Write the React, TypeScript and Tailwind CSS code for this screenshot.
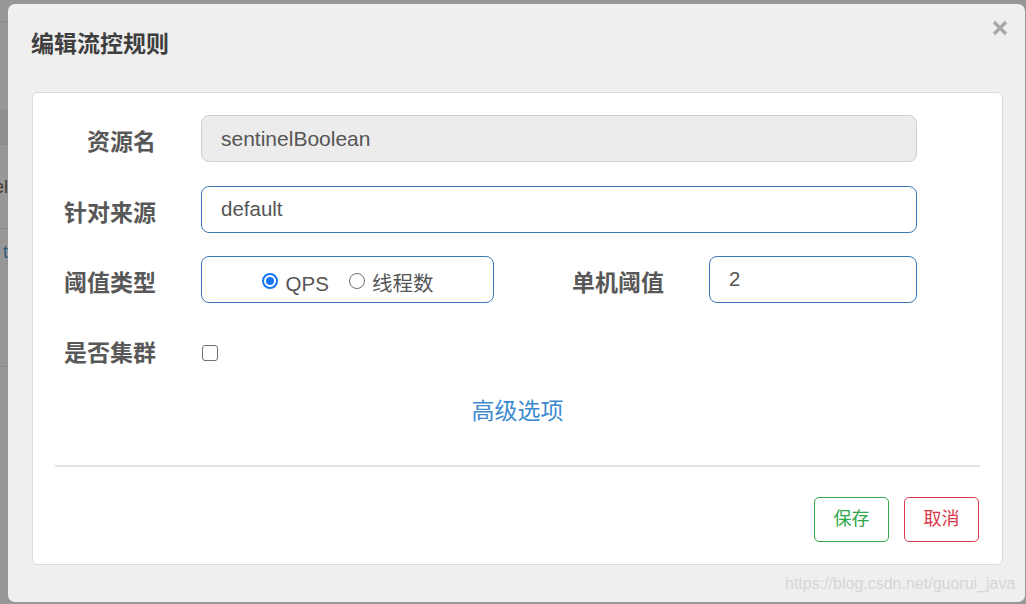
import React from "react";

const FONT = { fontFamily: '"Liberation Sans", "Noto Sans CJK SC", sans-serif' };

function Label({ children, w }: { children: React.ReactNode; w: string }) {
  return (
    <div className={`${w} shrink-0 text-right text-[23px] font-bold text-[#585858] pt-[16px] leading-none`}>
      {children}
    </div>
  );
}

export default function App() {
  return (
    <div className="relative w-[1026px] h-[604px] overflow-hidden bg-[#979797]" style={FONT}>
      {/* background page remnants */}
      <div className="flex flex-col w-[8px] overflow-hidden">
        <div className="h-[22px] border-b border-[#8a8a8a]" />
        <div className="h-[88px]" />
        <div className="h-[35px] bg-[#8f8f8f] border-b border-[#8a8a8a]" />
        <div className="h-[84px] border-b border-[#8a8a8a] flex items-center justify-end text-[18px] text-[#4a3a2e] leading-none">
          <span className="shrink-0">el</span>
        </div>
        <div className="h-[138px] border-b border-[#8a8a8a] pt-[14px] flex justify-end text-[18px] text-[#2f5a78] leading-none">
          <span className="shrink-0">t</span>
        </div>
      </div>

      {/* modal */}
      <div className="absolute left-[8px] top-[4px] w-[1017px] h-[598px] rounded-[7px] bg-[#efefef]">
        <div className="flex items-center justify-between h-[82px] pl-[23px] pr-[17px]">
          <div className="text-[23px] font-bold text-[#3e3e3e] leading-none -mt-[1px]">编辑流控规则</div>
          <svg width="16" height="16" viewBox="0 0 16 16" className="-mt-[34px]">
            <path d="M2 2 L14 14 M14 2 L2 14" stroke="#a8a8a8" strokeWidth="3.2" strokeLinecap="butt" />
          </svg>
        </div>

        <div className="ml-[24px] mt-[6px] w-[971px] h-[473px] rounded-[6px] border border-[#dadada] bg-white flex flex-col">
          <div className="flex flex-col pt-[22px]">
            {/* row 1 */}
            <div className="flex items-start gap-[45px] mb-[24px]">
              <Label w="w-[123px]">资源名</Label>
              <div className="w-[716px] h-[47px] rounded-[8px] border border-[#cfcfcf] bg-[#ececec] flex items-center px-[19px] text-[21px] text-[#555]">
                sentinelBoolean
              </div>
            </div>
            {/* row 2 */}
            <div className="flex items-start gap-[45px] mb-[23px]">
              <Label w="w-[123px]">针对来源</Label>
              <div className="w-[716px] h-[47px] rounded-[8px] border border-[#3b78b8] bg-white flex items-center px-[19px] text-[20.5px] text-[#555]">
                default
              </div>
            </div>
            {/* row 3 */}
            <div className="flex items-start mb-[23px]">
              <Label w="w-[123px]">阈值类型</Label>
              <div className="ml-[45px] w-[293px] h-[47px] rounded-[8px] border border-[#3b78b8] bg-white flex items-center justify-center pt-[9px] text-[20.5px] text-[#555]">
                <div className="w-[16px] h-[16px] rounded-full border-[2px] border-[#1476f2] flex items-center justify-center -mt-[7px]">
                  <div className="w-[8px] h-[8px] rounded-full bg-[#1476f2]" />
                </div>
                <span className="ml-[8px] leading-none">QPS</span>
                <div className="ml-[20px] w-[16px] h-[16px] rounded-full border-[1.5px] border-[#707070] -mt-[7px]" />
                <span className="ml-[7px] leading-none">线程数</span>
              </div>
              <Label w="w-[170px]">单机阈值</Label>
              <div className="ml-[45px] w-[208px] h-[47px] rounded-[8px] border border-[#3b78b8] bg-white flex items-center px-[19px] text-[20.5px] text-[#555]">
                2
              </div>
            </div>
            {/* row 4 */}
            <div className="flex items-start h-[47px]">
              <Label w="w-[123px]">是否集群</Label>
              <div className="ml-[46px] mt-[19px] w-[16px] h-[16px] rounded-[3px] border-[1.5px] border-[#6f6f6f] bg-white" />
            </div>
          </div>

          <div className="mt-[27px] text-center text-[23px] text-[#3d8ad0] leading-none">高级选项</div>

          <div className="mx-[22px] mt-[42px] h-[2px] bg-[#e3e3e3]" />

          <div className="flex justify-end gap-[15px] mr-[23px] mt-[30px]">
            <div className="w-[75px] h-[45px] rounded-[5px] border border-[#2ea84a] text-[#2ea84a] text-[18px] flex items-center justify-center">
              保存
            </div>
            <div className="w-[75px] h-[45px] rounded-[5px] border border-[#d9394b] text-[#d9394b] text-[18px] flex items-center justify-center">
              取消
            </div>
          </div>
        </div>

        <div className="absolute left-[777px] top-[572px] text-[16px] text-[#d6d6d6] leading-none" style={{ fontFamily: '"Liberation Sans", sans-serif' }}>
          https://blog.csdn.net/guorui_java
        </div>
      </div>
    </div>
  );
}
